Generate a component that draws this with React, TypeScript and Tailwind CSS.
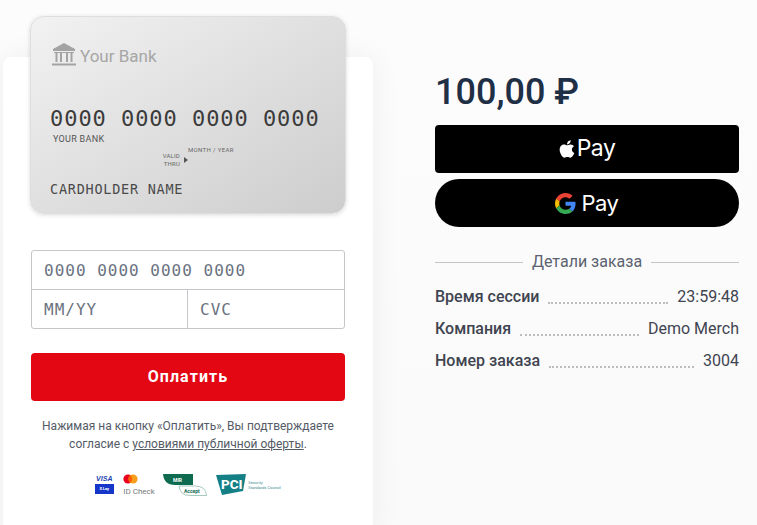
import React from "react";

const mono = "font-['DejaVu_Sans_Mono','Liberation_Mono',monospace]";

function Bank() {
  return (
    <svg width="24" height="24" viewBox="0 0 24 24" fill="#a3a3a3" aria-hidden>
      <path d="M12 1 L23 7 V9 H1 V7 Z" />
      <rect x="2" y="10" width="20" height="1" />
      <rect x="3.5" y="11" width="2" height="9" />
      <rect x="8" y="11" width="2" height="9" />
      <rect x="14" y="11" width="2" height="9" />
      <rect x="18.5" y="11" width="2" height="9" />
      <rect x="0" y="21.5" width="24" height="2" />
    </svg>
  );
}

function AppleLogo() {
  return (
    <svg width="16" height="20" viewBox="0 0 384 512" fill="#fff" aria-hidden>
      <path d="M318.7 268.7c-.2-36.7 16.4-64.4 50-84.8-18.8-26.9-47.2-41.7-84.7-44.6-35.5-2.8-74.3 20.7-88.5 20.7-15 0-49.4-19.7-76.4-19.7C63.3 141.2 4 184.8 4 273.5q0 39.3 14.4 81.2c12.8 36.7 59 126.7 107.2 125.2 25.2-.6 43-17.9 75.8-17.9 31.8 0 48.3 17.9 76.4 17.9 48.6-.7 90.4-82.5 102.6-119.3-65.2-30.7-61.7-90-61.7-91.9zm-56.6-164.2c27.3-32.4 24.8-61.9 24-72.5-24.1 1.4-52 16.4-67.9 34.9-17.5 19.8-27.8 44.3-25.6 71.9 26.1 2 49.9-11.4 69.5-34.3z" />
    </svg>
  );
}

function GoogleLogo() {
  return (
    <svg width="21" height="21" viewBox="0 0 48 48" aria-hidden>
      <path fill="#EA4335" d="M24 9.5c3.54 0 6.71 1.22 9.21 3.6l6.85-6.85C35.9 2.38 30.47 0 24 0 14.62 0 6.51 5.38 2.56 13.22l7.98 6.19C12.43 13.72 17.74 9.5 24 9.5z" />
      <path fill="#4285F4" d="M46.98 24.55c0-1.57-.15-3.09-.38-4.55H24v9.02h12.94c-.58 2.96-2.26 5.48-4.78 7.18l7.73 6c4.51-4.18 7.09-10.36 7.09-17.65z" />
      <path fill="#FBBC05" d="M10.53 28.59c-.48-1.45-.76-2.99-.76-4.59s.27-3.14.76-4.59l-7.98-6.19C.92 16.46 0 20.12 0 24c0 3.88.92 7.54 2.56 10.78l7.97-6.19z" />
      <path fill="#34A853" d="M24 48c6.48 0 11.93-2.13 15.89-5.81l-7.73-6c-2.15 1.45-4.92 2.3-8.16 2.3-6.26 0-11.57-4.22-13.47-9.91l-7.98 6.19C6.51 42.62 14.62 48 24 48z" />
    </svg>
  );
}

function Row({ label, value }: { label: string; value: string }) {
  return (
    <div className="flex items-end h-[24px] text-[16px] leading-[24px] text-[#3f4450]">
      <span className="font-medium whitespace-nowrap">{label}</span>
      <span className="flex-1 mx-[9px] mb-[5px] border-b-2 border-dotted border-[#bdbdbd]" />
      <span className="whitespace-nowrap">{value}</span>
    </div>
  );
}

function Logos() {
  return (
    <div className="flex items-start justify-center mt-[21px] h-[24px] -ml-[1px]">
      <div className="flex flex-col items-center w-[20px]">
        <span className="text-[7px] leading-[9px] font-bold italic text-[#1a3fb0] font-['Liberation_Sans']">VISA</span>
        <span className="mt-[1px] w-[19px] h-[10px] bg-[#1536c8] text-white text-[4px] leading-[10px] text-center font-bold">S Lay</span>
      </div>
      <div className="ml-[9px] w-[31px] flex flex-col items-start">
        <svg width="15" height="10" viewBox="0 0 15 10" aria-hidden>
          <circle cx="5" cy="5" r="4.6" fill="#eb001b" />
          <circle cx="10" cy="5" r="4.6" fill="#f79e1b" />
          <path d="M7.5 1.4a4.6 4.6 0 0 1 0 7.2a4.6 4.6 0 0 1 0-7.2z" fill="#ff5f00" />
        </svg>
        <span className="mt-[2px] text-[8px] leading-[11px] text-[#7a7a7a] whitespace-nowrap">ID Check</span>
      </div>
      <svg className="ml-[9px]" width="44" height="22" viewBox="0 0 44 22" aria-hidden>
        <path d="M0 0H30V11H12Q1 11 0 0Z" fill="#0f6b50" />
        <text x="10" y="8" fontSize="5" fontWeight="700" fill="#fff">MIR</text>
        <path d="M16 12H32Q43 12 43.5 21.5H27Q17 21.5 16 12Z" fill="#fff" stroke="#7fb3a3" strokeWidth="0.7" />
        <text x="21" y="19" fontSize="5" fontWeight="700" fill="#0f6b50">Accept</text>
      </svg>
      <div className="ml-[9px] flex items-start">
        <svg width="32" height="21" viewBox="0 0 32 21" aria-hidden>
          <path d="M0 1L30 0L27 17L6 21Z" fill="#157f86" />
          <text x="5" y="15" fontSize="13.5" fontWeight="800" fill="#fff" fontFamily="Roboto">PCI</text>
        </svg>
        <div className="mt-[6px] text-[4px] leading-[5px] text-[#3d8a8f] whitespace-nowrap">
          Security
          <br />
          Standards Council
        </div>
      </div>
    </div>
  );
}

export default function App() {
  return (
    <div className="w-[757px] h-[525px] overflow-hidden flex bg-gradient-to-b from-[#fcfcfc] to-[#fafafa] pl-[3px] pt-[57px] font-['Roboto',sans-serif]">
      <section className="w-[370px] h-[480px] shrink-0 bg-white rounded-[8px] px-[28px] shadow-[0_0_30px_rgba(0,0,0,0.06)]">
        <div className="-mt-[41px] h-[198px] w-[316px] -ml-[1px] rounded-[14px] bg-gradient-to-br from-[#f2f2f2] to-[#cdcdcd] border border-[#dedede] shadow-[0_1px_4px_rgba(0,0,0,0.15)] pl-[19px] pr-[10px]">
          <div className="flex items-center mt-[25px] ml-[2px] h-[24px]">
            <Bank />
            <span className="ml-[4px] text-[17px] leading-[24px] text-[#a6a6a6] mt-[3px]">Your Bank</span>
          </div>
          <div className={`${mono} mt-[39px] text-[22px] leading-[28px] whitespace-nowrap text-[#3b3b3b] tracking-[0.95px]`}>0000 0000 0000 0000</div>
          <div className="ml-[3px] mt-[1px] text-[9px] leading-[11px] text-[#555] tracking-[0.3px]">YOUR BANK</div>
          <div className="flex ml-[111px] mt-[1px] h-[27px]">
            <div className="mt-[6px] text-[6px] leading-[8px] text-[#666] text-right w-[19px] tracking-[0.2px]">
              VALID
              <br />
              THRU
            </div>
            <div className="mt-[11px] ml-[4px] w-0 h-0 border-y-[3px] border-y-transparent border-l-[4px] border-l-[#555]" />
            <div className="text-[6px] leading-[8px] text-[#666] tracking-[0.35px] whitespace-nowrap">MONTH / YEAR</div>
          </div>
          <div className={`${mono} mt-[6px] text-[13.5px] leading-[20px] whitespace-nowrap text-[#4a4a4a] tracking-[0.75px]`}>CARDHOLDER NAME</div>
        </div>

        <div className="mt-[36px] w-[314px] h-[79px] border border-[#c4c6ca] rounded-[3px] flex flex-col">
          <div className={`${mono} h-[39px] border-b border-[#c4c6ca] pl-[12px] text-[16px] leading-[39px] text-[#6b7280] whitespace-nowrap tracking-[1px]`}>0000 0000 0000 0000</div>
          <div className={`${mono} flex flex-1 text-[16px] leading-[39px] text-[#6b7280] tracking-[1px]`}>
            <div className="w-[156px] border-r border-[#c4c6ca] pl-[12px]">MM/YY</div>
            <div className="pl-[12px]">CVC</div>
          </div>
        </div>

        <button className="mt-[24px] w-[314px] h-[48px] rounded-[4px] bg-[#e30613] text-white text-[16px] font-bold tracking-[1.1px] block">Оплатить</button>

        <p className="mt-[16px] text-center text-[12px] leading-[18px] text-[#555b66]">
          Нажимая на кнопку «Оплатить», Вы подтверждаете
          <br />
          согласие с <span className="underline">условиями публичной оферты</span>.
        </p>

        <Logos />
      </section>

      <aside className="ml-[62px] w-[304px] shrink-0 flex flex-col">
        <div className="mt-[13px] h-[44px] text-[36px] leading-[44px] font-medium text-[#1f2f46] whitespace-nowrap">100,00 ₽</div>
        <div className="mt-[11px] h-[48px] rounded-[4px] bg-black flex items-center justify-center gap-[2px] text-white">
          <AppleLogo />
          <span className="font-['Inter',sans-serif] text-[23px] tracking-[-0.5px] -mt-[2px]">Pay</span>
        </div>
        <div className="mt-[6px] h-[48px] rounded-full bg-black flex items-center justify-center gap-[6px] text-white pr-[1px]">
          <GoogleLogo />
          <span className="font-['Inter',sans-serif] text-[22px] tracking-[-0.5px]">Pay</span>
        </div>
        <div className="mt-[23px] flex items-center h-[24px]">
          <span className="flex-1 h-px bg-[#c4c4c4]" />
          <span className="mx-[9px] text-[16px] text-[#5c6270]">Детали заказа</span>
          <span className="flex-1 h-px bg-[#c4c4c4]" />
        </div>
        <div className="mt-[11px] flex flex-col gap-[8px]">
          <Row label="Время сессии" value="23:59:48" />
          <Row label="Компания" value="Demo Merch" />
          <Row label="Номер заказа" value="3004" />
        </div>
      </aside>
    </div>
  );
}
